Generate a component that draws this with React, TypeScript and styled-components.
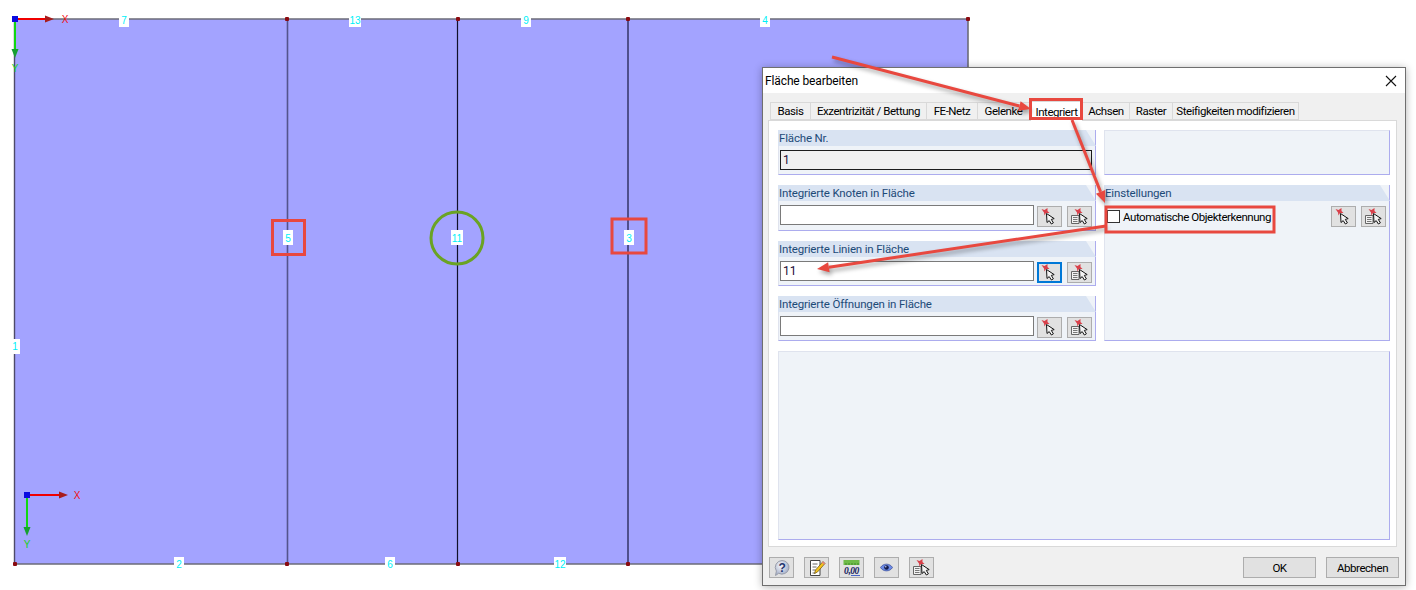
import React from 'react';
import styled, { createGlobalStyle } from 'styled-components';

const GlobalStyle = createGlobalStyle`
    html, body {
        margin: 0;
        padding: 0;
        background: #fff;
    }
    body {
        font-family: Roboto, "Open Sans", sans-serif;
    }
`;

const Page = styled.div`
    position: relative;
    width: 1416px;
    height: 590px;
    overflow: hidden;
    background: #fff;
`;

const ModelSvg = styled.svg`
    display: block;
    text {
        font-family: "Liberation Sans", sans-serif;
        font-size: 10px;
        text-anchor: middle;
    }
`;

const OverlaySvg = styled.svg`
    position: absolute;
    left: 0;
    top: 0;
    pointer-events: none;
`;

const ArrowGroup = styled.g`
    filter: drop-shadow(2px 3px 2px rgba(0, 0, 0, 0.35));
`;

const Dialog = styled.div`
    position: absolute;
    left: 762px;
    top: 67px;
    width: 644px;
    height: 519px;
    box-sizing: border-box;
    display: flex;
    flex-direction: column;
    background: #f0f0f0;
    border: 1px solid #6f6f6f;
    box-shadow: 0 1px 8px rgba(0, 0, 0, 0.3);
    color: #000;
    font-size: 11.5px;
    letter-spacing: -0.45px;
`;

const TitleBar = styled.div`
    height: 25px;
    flex: none;
    display: flex;
    align-items: center;
    justify-content: space-between;
    padding: 0 8px 0 2px;
    background: #fff;
    font-size: 12px;
    letter-spacing: -0.12px;
`;

const TabStrip = styled.div`
    display: flex;
    align-items: flex-end;
    height: 27px;
    flex: none;
    padding-left: 7px;
`;

const Tab = styled.div<{ $w: number; $active?: boolean }>`
    width: ${props => props.$w}px;
    height: ${props => (props.$active ? 20 : 18)}px;
    box-sizing: border-box;
    display: flex;
    align-items: center;
    justify-content: center;
    white-space: nowrap;
    background: ${props => (props.$active ? '#fff' : '#f0f0f0')};
    border: 1px solid #d9d9d9;
    border-bottom: ${props => (props.$active ? 'none' : '1px solid #d9d9d9')};
    border-left: ${props => (props.$active ? '1px solid #d9d9d9' : 'none')};
    margin-bottom: ${props => (props.$active ? '-1px' : '0')};
    position: relative;
    &:first-child {
        border-left: 1px solid #d9d9d9;
    }
`;

const TabPanel = styled.div`
    margin: 0 8px 0 5px;
    height: 427px;
    flex: none;
    box-sizing: border-box;
    background: #fff;
    border: 1px solid #d9d9d9;
    padding: 9px 6px 6px 9px;
    display: flex;
    flex-direction: column;
    gap: 10px;
`;

const Columns = styled.div`
    display: grid;
    grid-template-columns: 318px 286px;
    column-gap: 8px;
`;

const Stack = styled.div`
    display: flex;
    flex-direction: column;
    gap: 10px;
`;

const Group = styled.div<{ $h: number }>`
    height: ${props => props.$h}px;
    box-sizing: border-box;
    background: #eff3f8;
    border-bottom: 1px solid #acacee;
    border-right: 1px solid #acacee;
    border-left: 1px solid #dfe3ee;
    display: flex;
    flex-direction: column;
`;

const GroupHead = styled.div`
    height: 16px;
    flex: none;
    margin: 0 -1px 0 -1px;
    padding-left: 1px;
    background: #d9e3f2;
    color: #1d4a78;
    font-size: 11.5px;
    letter-spacing: -0.17px;
    line-height: 16px;
    clip-path: polygon(0 0, calc(100% - 10px) 0, 100% 100%, 0 100%);
`;

const FieldRow = styled.div`
    display: flex;
    align-items: flex-start;
    gap: 3px;
    padding: 4px 3px 0 1px;
`;

const TextBox = styled.input<{ $locked?: boolean }>`
    flex: 1;
    min-width: 0;
    height: 20px;
    box-sizing: border-box;
    padding: 0 2px;
    margin: 0;
    border: 1px solid ${props => (props.$locked ? '#1c1c1c' : '#7a7a7a')};
    background: ${props => (props.$locked ? '#f0f0f0' : '#fff')};
    color: #1c0a36;
    font-family: inherit;
    font-size: 12px;
    outline: none;
`;

const IconButton = styled.div<{ $focus?: boolean }>`
    width: 25px;
    height: 21px;
    flex: none;
    box-sizing: border-box;
    display: flex;
    align-items: center;
    justify-content: center;
    background: #e1e1e1;
    border: ${props => (props.$focus ? '2px solid #0078d7' : '1px solid #adadad')};
`;

const PairGap = styled.div`
    display: flex;
    gap: 5px;
    margin-top: 1px;
`;

const SettingsBody = styled.div`
    display: flex;
    justify-content: space-between;
    padding: 4px 3px 0 2px;
`;

const CheckLabel = styled.label`
    display: flex;
    align-items: center;
    gap: 3px;
    height: 23px;
    font-size: 11.5px;
`;

const CheckBox = styled.span`
    width: 13px;
    height: 13px;
    flex: none;
    box-sizing: border-box;
    background: #fff;
    border: 1px solid #333;
`;

const WideBox = styled.div<{ $h: number }>`
    height: ${props => props.$h}px;
    box-sizing: border-box;
    background: #eff3f8;
    border-bottom: 1px solid #acacee;
    border-right: 1px solid #acacee;
    border-left: 1px solid #dfe3ee;
    border-top: 1px solid #dfe3ee;
`;

const Footer = styled.div`
    flex: 1;
    display: flex;
    justify-content: space-between;
    padding: 10px 6px 0 6px;
`;

const FooterGroup = styled.div<{ $gap: number }>`
    display: flex;
    gap: ${props => props.$gap}px;
`;

const TextButton = styled.div`
    width: 73px;
    height: 21px;
    box-sizing: border-box;
    display: flex;
    align-items: center;
    justify-content: center;
    background: #e1e1e1;
    border: 1px solid #adadad;
`;

const PinCursor = ({ x = 0 }: { x?: number }) => (
    <g transform={`translate(${x} 0)`}>
        <path d="M0.5 1 L3.5 2 L6.5 0 L6.5 3 L8.5 5 L5 5 L3.5 7.5 L3 4.5 Z" fill="#d8404a" />
        <path d="M5.5 5.5 L6 14.5 L8.2 12.6 L10.4 16 L12.4 14.8 L10.3 11.4 L13.2 10.6 Z" fill="#f4f4f4" stroke="#111" strokeWidth="1" strokeLinejoin="round" />
    </g>
);

const PickIcon = () => (
    <svg width="17" height="17" viewBox="0 0 17 17">
        <PinCursor />
    </svg>
);

const ListPickIcon = () => (
    <svg width="19" height="17" viewBox="0 0 19 17">
        <path d="M1.5 7.5 H9 V15.5 H1.5 Z" fill="#f2f2f2" stroke="#666" />
        <path d="M3 9.5 H7.5 M3 11.5 H7.5 M3 13.5 H7.5" stroke="#777" />
        <PinCursor x={4} />
    </svg>
);

const HelpIcon = () => (
    <svg width="19" height="18" viewBox="0 0 19 18">
        <defs>
            <radialGradient id="helpGlobe" cx="40%" cy="35%" r="70%">
                <stop offset="0" stopColor="#f7f8fb" />
                <stop offset="1" stopColor="#9aa6c4" />
            </radialGradient>
        </defs>
        <path d="M10 1.5 a7 6.8 0 1 1 -3.3 12.8 L3.5 16.5 L4.4 12 A7 6.8 0 0 1 10 1.5 Z" fill="url(#helpGlobe)" stroke="#9a9eaa" />
        <text x="10" y="12.5" textAnchor="middle" fontSize="12" fontWeight="700" fontFamily="Liberation Sans, sans-serif" fill="#23356e">?</text>
    </svg>
);

const EditIcon = () => (
    <svg width="19" height="18" viewBox="0 0 19 18">
        <path d="M3.5 1.5 H13 V16.5 H3.5 Z" fill="#fff" stroke="#444" />
        <path d="M5.5 5 H10.5 M5.5 8 H9.5 M5.5 11 H8.5 M5.5 14 H8.5" stroke="#666" />
        <path d="M16 2.5 L18 4.5 L10.5 13 L7.5 14.5 L8.5 11 Z" fill="#f3c21c" stroke="#6b5310" strokeWidth="0.7" />
        <path d="M16 2.5 L18 4.5 L17 5.6 L15 3.6 Z" fill="#e87a8a" />
    </svg>
);

const DecimalIcon = () => (
    <svg width="19" height="18" viewBox="0 0 19 18">
        <rect x="1.5" y="1" width="16" height="5" fill="#6fba48" />
        <path d="M4 4 V6 M7 4 V6 M10 4 V6 M13 4 V6 M16 4 V6" stroke="#3f8a28" />
        <text x="9.5" y="14.5" textAnchor="middle" fontSize="9.5" fontStyle="italic" fontWeight="700" fontFamily="Liberation Serif, serif" fill="#14205c">0,00</text>
        <path d="M9 16.5 H18" stroke="#4a66c4" />
    </svg>
);

const EyeIcon = () => (
    <svg width="13" height="11" viewBox="0 0 13 11">
        <path d="M0.5 5.5 C3 1 10 1 12.5 5.5 C10 10 3 10 0.5 5.5 Z" fill="#6b8ae6" stroke="#3a4c96" strokeWidth="0.7" />
        <circle cx="6.5" cy="5.5" r="2.3" fill="#11194a" />
        <circle cx="5.8" cy="4.8" r="0.7" fill="#dfe6ff" />
    </svg>
);

const CloseIcon = () => (
    <svg width="12" height="12" viewBox="0 0 12 12">
        <path d="M1 1 L11 11 M11 1 L1 11" stroke="#111" strokeWidth="1.1" />
    </svg>
);

const tabs = [
    { label: 'Basis', w: 41 },
    { label: 'Exzentrizität / Bettung', w: 116 },
    { label: 'FE-Netz', w: 51 },
    { label: 'Gelenke', w: 52 },
    { label: 'Integriert', w: 53, active: true },
    { label: 'Achsen', w: 47 },
    { label: 'Raster', w: 43 },
    { label: 'Steifigkeiten modifizieren', w: 126 },
];

const plateLabels = [
    { t: '7', x: 124, top: 16, h: 11, base: 24 },
    { t: '13', x: 355, top: 16, h: 11, base: 24 },
    { t: '9', x: 526, top: 16, h: 11, base: 24 },
    { t: '4', x: 765, top: 16, h: 11, base: 24 },
    { t: '5', x: 288, top: 230, h: 15, base: 242 },
    { t: '11', x: 457, top: 230, h: 15, base: 242 },
    { t: '3', x: 629, top: 230, h: 15, base: 242 },
    { t: '1', x: 15, top: 339, h: 15, base: 350 },
    { t: '2', x: 179, top: 557, h: 13, base: 568 },
    { t: '6', x: 390, top: 557, h: 13, base: 568 },
    { t: '12', x: 560, top: 557, h: 13, base: 568 },
];

const nodes: [number, number][] = [
    [15, 19], [287, 19], [458, 19], [628, 19], [968, 19],
    [15, 564], [287, 564], [458, 564], [628, 564],
];

const Axes = ({ x, y, len, labelX, labelY }: { x: number; y: number; len: number; labelX: number; labelY: number }) => (
    <g>
        <path d={`M${x} ${y} H${x + len - 8}`} stroke="#f00000" strokeWidth="2" />
        <path d={`M${x + len - 9} ${y - 3.5} L${x + len} ${y} L${x + len - 9} ${y + 3.5} Z`} fill="#a81c1c" />
        <path d={`M${x} ${y} V${y + len - 8}`} stroke="#10d810" strokeWidth="2" />
        <path d={`M${x - 3.5} ${y + len - 9} L${x} ${y + len} L${x + 3.5} ${y + len - 9} Z`} fill="#16a030" />
        <rect x={x - 3} y={y - 3} width="6" height="6" fill="#0a0ae0" />
        <text x={labelX} y={y + 4} fill="#f01010">X</text>
        <text x={x} y={labelY} fill="#20d020">Y</text>
    </g>
);

const Model = () => (
    <ModelSvg width="1416" height="590" viewBox="0 0 1416 590">
        <rect x="15" y="19" width="953" height="545" fill="#a3a3ff" />
        <path d="M15 19 H968 V564 H15" fill="none" stroke="#6c6c78" strokeWidth="1.6" />
        <path d="M14.5 19 V564" stroke="#4e4a6a" strokeWidth="1.4" />
        <path d="M287.5 19 V564" stroke="#54548c" strokeWidth="1.6" />
        <path d="M457.5 19 V564" stroke="#10102a" strokeWidth="1.2" />
        <path d="M628 19 V564" stroke="#2c2c5c" strokeWidth="1.4" />
        {nodes.map(([x, y]) => (
            <rect key={`${x}-${y}`} x={x - 2} y={y - 2} width="4" height="4" rx="1" fill="#8a0a10" />
        ))}
        {plateLabels.map(l => (
            <g key={l.t}>
                <rect x={l.x - (l.t.length > 1 ? 6 : 5)} y={l.top} width={l.t.length > 1 ? 12 : 10} height={l.h} fill="#fff" />
                <text x={l.x} y={l.base} fill="#00f0f8">{l.t}</text>
            </g>
        ))}
        <Axes x={15} y={19} len={39} labelX={65} labelY={72} />
        <Axes x={27} y={495} len={41} labelX={77} labelY={548} />
        <circle cx="457" cy="238" r="26" fill="none" stroke="#6aa323" strokeWidth="3" />
    </ModelSvg>
);

// head is computed from the line direction, so each arrow only needs two points
const Arrow = ({ x1, y1, x2, y2 }: { x1: number; y1: number; x2: number; y2: number }) => {
    const a = Math.atan2(y2 - y1, x2 - x1);
    const bx = x2 - Math.cos(a) * 12;
    const by = y2 - Math.sin(a) * 12;
    const nx = -Math.sin(a) * 5;
    const ny = Math.cos(a) * 5;
    return (
        <ArrowGroup>
            <line x1={x1} y1={y1} x2={bx} y2={by} stroke="#e8483f" strokeWidth="3" />
            <polygon points={`${x2},${y2} ${bx + nx},${by + ny} ${bx - nx},${by - ny}`} fill="#e8483f" />
        </ArrowGroup>
    );
};

const Marks = () => (
    <OverlaySvg width="1416" height="590" viewBox="0 0 1416 590">
        <Arrow x1={832} y1={57} x2={1031} y2={109} />
        <Arrow x1={1072} y1={120} x2={1105} y2={203} />
        <Arrow x1={1106} y1={226} x2={817} y2={269} />
        <g fill="none" stroke="#e8483f" strokeWidth="3">
            <rect x="272.5" y="220.5" width="32" height="34" />
            <rect x="612" y="219" width="34" height="34" />
            <rect x="1030.5" y="99.5" width="51" height="19" />
            <rect x="1106" y="207" width="168" height="25" />
        </g>
    </OverlaySvg>
);

const PickPair = ({ focus }: { focus?: boolean }) => (
    <PairGap>
        <IconButton $focus={focus}><PickIcon /></IconButton>
        <IconButton><ListPickIcon /></IconButton>
    </PairGap>
);

const App: React.FC = () => {
    return (
        <Page>
            <GlobalStyle />
            <Model />
            <Dialog>
                <TitleBar>
                    <span>Fläche bearbeiten</span>
                    <CloseIcon />
                </TitleBar>
                <TabStrip>
                    {tabs.map(tab => (
                        <Tab key={tab.label} $w={tab.w} $active={tab.active}>{tab.label}</Tab>
                    ))}
                </TabStrip>
                <TabPanel>
                    <Columns>
                        <Stack>
                            <Group $h={45}>
                                <GroupHead>Fläche Nr.</GroupHead>
                                <FieldRow>
                                    <TextBox $locked readOnly value="1" />
                                </FieldRow>
                            </Group>
                            <Group $h={46}>
                                <GroupHead>Integrierte Knoten in Fläche</GroupHead>
                                <FieldRow>
                                    <TextBox readOnly value="" />
                                    <PickPair />
                                </FieldRow>
                            </Group>
                            <Group $h={45}>
                                <GroupHead>Integrierte Linien in Fläche</GroupHead>
                                <FieldRow>
                                    <TextBox readOnly value="11" />
                                    <PickPair focus />
                                </FieldRow>
                            </Group>
                            <Group $h={45}>
                                <GroupHead>Integrierte Öffnungen in Fläche</GroupHead>
                                <FieldRow>
                                    <TextBox readOnly value="" />
                                    <PickPair />
                                </FieldRow>
                            </Group>
                        </Stack>
                        <Stack>
                            <WideBox $h={45} />
                            <Group $h={156}>
                                <GroupHead>Einstellungen</GroupHead>
                                <SettingsBody>
                                    <CheckLabel>
                                        <CheckBox />
                                        Automatische Objekterkennung
                                    </CheckLabel>
                                    <PairGap><IconButton><PickIcon /></IconButton><IconButton><ListPickIcon /></IconButton></PairGap>
                                </SettingsBody>
                            </Group>
                        </Stack>
                    </Columns>
                    <WideBox $h={190} />
                </TabPanel>
                <Footer>
                    <FooterGroup $gap={10}>
                        <IconButton><HelpIcon /></IconButton>
                        <IconButton><EditIcon /></IconButton>
                        <IconButton><DecimalIcon /></IconButton>
                        <IconButton><EyeIcon /></IconButton>
                        <IconButton><ListPickIcon /></IconButton>
                    </FooterGroup>
                    <FooterGroup $gap={10}>
                        <TextButton>OK</TextButton>
                        <TextButton>Abbrechen</TextButton>
                    </FooterGroup>
                </Footer>
            </Dialog>
            <Marks />
        </Page>
    );
};

export default App;
